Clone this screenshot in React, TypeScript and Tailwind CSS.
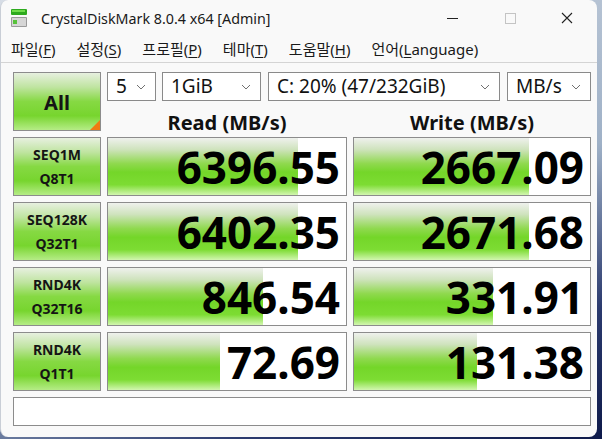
import React from 'react'

const font = { fontFamily: '"Noto Sans", "Noto Sans CJK KR", sans-serif' }

type Row = { a: string; b: string; read: number; write: number }

const rows: Row[] = [
  { a: 'SEQ1M', b: 'Q8T1', read: 6396.55, write: 2667.09 },
  { a: 'SEQ128K', b: 'Q32T1', read: 6402.35, write: 2671.68 },
  { a: 'RND4K', b: 'Q32T16', read: 846.54, write: 331.91 },
  { a: 'RND4K', b: 'Q1T1', read: 72.69, write: 131.38 },
]

// bar length follows a log scale, like the real app
const barWidth = (v: number) => Math.min(238, 40 * Math.log10(v) + 38)

function Chevron() {
  return (
    <svg width="10" height="6" viewBox="0 0 10 6" className="shrink-0">
      <path d="M1 1 L5 5 L9 1" fill="none" stroke="#707070" strokeWidth="1" />
    </svg>
  )
}

function Select({ w, label }: { w: string; label: string }) {
  return (
    <div
      className={`${w} flex h-[29px] items-center justify-between border border-[#8a8a8a] bg-white pl-[8px] pr-[9px] text-[19px] text-[#111]`}
    >
      <span>{label}</span>
      <Chevron />
    </div>
  )
}

function Label({ a, b }: { a: string; b: string }) {
  return (
    <div className="flex h-[59px] flex-col items-center justify-center border border-[#8c8c8c] bg-[linear-gradient(to_bottom,#e7f0df_0%,#bfe4a0_25%,#86d943_50%,#77d52e_75%,#b5ec86_100%)] pt-[1px] text-[14px] font-bold leading-[24px] text-[#151515]">
      <span>{a}</span>
      <span>{b}</span>
    </div>
  )
}

function Cell({ v }: { v: number }) {
  return (
    <div className="relative h-[59px] border border-[#8c8c8c] bg-white">
      <div
        className="absolute inset-y-0 left-0 bg-[linear-gradient(to_bottom,#eff1ed_0%,#cfe3bd_20%,#8fd94e_45%,#74d629_60%,#7ddc33_82%,#d2f6b0_100%)]"
        style={{ width: barWidth(v) }}
      />
      <div className="relative flex h-full items-center justify-end pr-[6px] text-[44px] font-bold leading-none text-black">
        {v.toFixed(2)}
      </div>
    </div>
  )
}

function Menu({ name, k, rest }: { name: string; k: string; rest?: string }) {
  return (
    <span>
      {name}(<span className="underline underline-offset-2">{k}</span>
      {rest})
    </span>
  )
}

export default function App() {
  return (
    <div
      className="h-[439px] w-[602px] overflow-hidden bg-[linear-gradient(160deg,#d7dde6_0%,#9fb1c7_55%,#2b3a6e_80%,#0e1a4a_100%)]"
      style={font}
    >
      <div className="flex h-[437px] w-[597px] flex-col overflow-hidden rounded-[8px] border-l border-[#c9ced6] bg-[#f9f9f9]">
        {/* title bar */}
        <div className="flex h-[36px] shrink-0 items-center">
          <svg width="18" height="20" viewBox="0 0 18 20" className="ml-[9px] mr-[13px]">
            <rect x="1" y="1" width="16" height="6" rx="1" fill="#2eaa1e" />
            <rect x="2" y="2" width="13" height="2" fill="#6fdc4a" />
            <rect x="1" y="9" width="16" height="10" rx="1" fill="#9a9a9a" />
            <rect x="2" y="10" width="14" height="8" fill="#d6d6d6" />
            <rect x="3" y="12" width="4" height="4" fill="#57c23a" />
          </svg>
          <span className="pt-[1px] text-[14.3px] text-[#1a1a1a]">CrystalDiskMark 8.0.4 x64 [Admin]</span>
          <div className="ml-auto flex items-center">
            <div className="flex w-[58px] justify-center">
              <div className="h-px w-[11px] bg-[#222]" />
            </div>
            <div className="flex w-[58px] justify-center">
              <div className="h-[11px] w-[11px] border border-[#c4c4c4]" />
            </div>
            <div className="flex w-[58px] justify-center pr-[3px]">
              <svg width="12" height="12" viewBox="0 0 12 12">
                <path d="M1 1 L11 11 M11 1 L1 11" stroke="#222" strokeWidth="1.1" />
              </svg>
            </div>
          </div>
        </div>
        {/* menu */}
        <div className="flex h-[27px] shrink-0 items-center gap-[21px] border-b border-[#d4d4d4] pl-[10px] text-[15px] text-[#1a1a1a]">
          <Menu name="파일" k="F" />
          <Menu name="설정" k="S" />
          <Menu name="프로필" k="P" />
          <Menu name="테마" k="T" />
          <Menu name="도움말" k="H" />
          <Menu name="언어" k="L" rest="anguage" />
        </div>
        {/* body */}
        <div className="flex flex-col gap-[6px] pl-[12px] pt-[9px]">
          <div className="grid grid-cols-[88px_484px] grid-rows-[59px] gap-x-[6px]">
            <div className="relative flex h-[59px] items-center justify-center overflow-hidden border border-[#8c8c8c] bg-[linear-gradient(to_bottom,#e7f0df_0%,#bfe4a0_25%,#86d943_50%,#77d52e_75%,#b5ec86_100%)] pt-[3px] text-[20px] font-bold text-[#151515]">
              All
              <div className="absolute bottom-0 right-0 h-0 w-0 border-b-[10px] border-l-[10px] border-b-[#f07a12] border-l-transparent" />
            </div>
            <div className="flex h-[59px] flex-col">
              <div className="flex gap-[7px]">
                <div className="mr-[-1px]">
                  <Select w="w-[49px]" label="5" />
                </div>
                <Select w="w-[99px]" label="1GiB" />
                <Select w="w-[232px]" label="C: 20% (47/232GiB)" />
                <Select w="w-[84px]" label="MB/s" />
              </div>
              <div className="grid h-[30px] grid-cols-[240px_238px] gap-x-[6px] text-[20px] font-bold leading-none text-[#111]">
                <div className="flex justify-center pt-[12px]">Read (MB/s)</div>
                <div className="flex justify-center pt-[12px]">Write (MB/s)</div>
              </div>
            </div>
          </div>
          {rows.map((r, i) => (
            <div key={i} className="grid grid-cols-[88px_240px_238px] gap-x-[6px]">
              <Label a={r.a} b={r.b} />
              <Cell v={r.read} />
              <Cell v={r.write} />
            </div>
          ))}
          <div className="h-[29px] w-[578px] border border-[#8c8c8c] bg-white" />
        </div>
      </div>
    </div>
  )
}
